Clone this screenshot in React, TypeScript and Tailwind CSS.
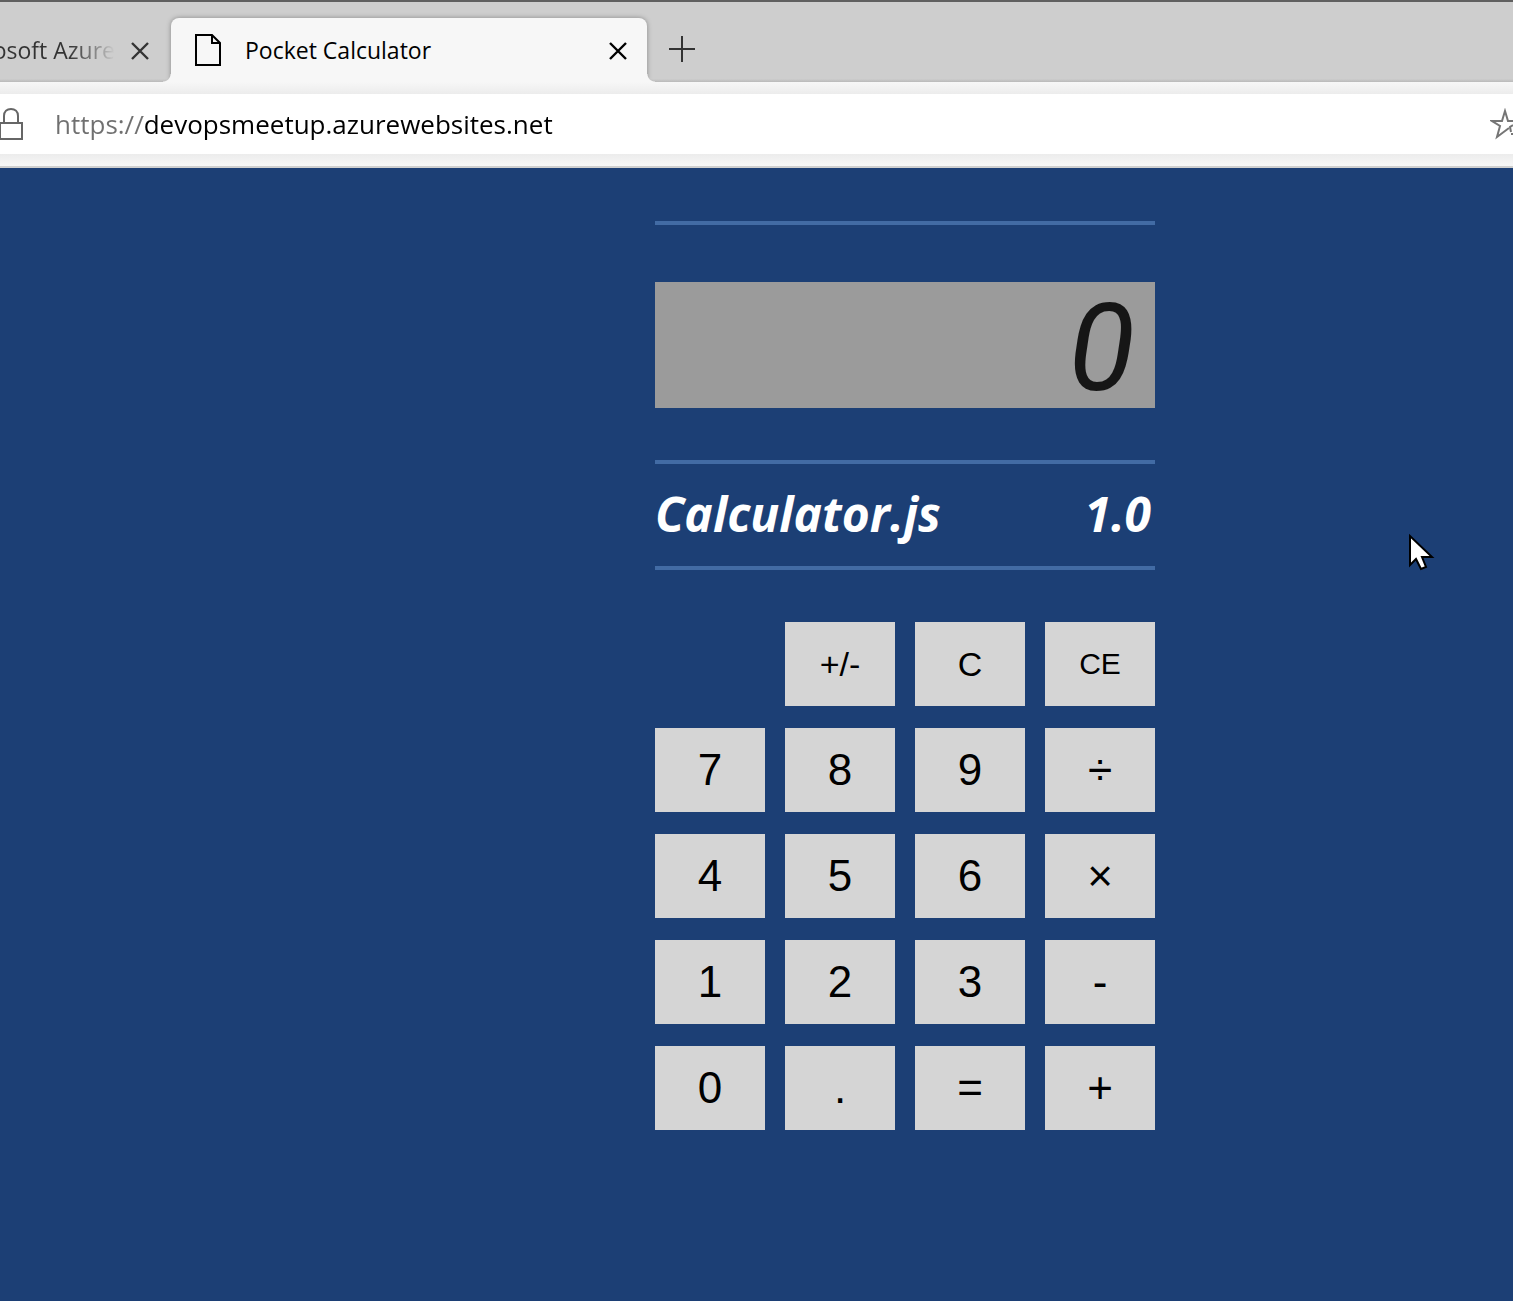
import { useState } from "react";

const KEY_ROWS: string[][] = [
  ["+/-", "C", "CE"],
  ["7", "8", "9", "÷"],
  ["4", "5", "6", "×"],
  ["1", "2", "3", "-"],
  ["0", ".", "=", "+"],
];

function CloseIcon() {
  return (
    <svg width="18" height="18" viewBox="0 0 18 18" fill="none" stroke="currentColor" strokeWidth="2.4" aria-hidden="true">
      <path d="M1 1 17 17M17 1 1 17" />
    </svg>
  );
}

function TabStrip() {
  return (
    <div className="flex h-[82px] border-t-2 border-[#606060] bg-[#cecece] bg-linear-to-t from-[#bababa] to-[#cecece] to-4% pt-4">
      <div className="flex w-[171px] shrink-0 items-center overflow-hidden text-[#333]">
        <button className="flex w-[115px] justify-end overflow-hidden bg-linear-to-r from-[#333] from-60% to-[#cecece] bg-clip-text text-[23px] whitespace-nowrap text-transparent">
          Microsoft Azure
        </button>
        <button aria-label="Close Microsoft Azure" className="ml-4 pt-0.5">
          <CloseIcon />
        </button>
      </div>
      <div className="relative flex w-[476px] shrink-0 items-center rounded-t-lg bg-[#f7f7f7] pr-5 pl-6 shadow-[0_0_5px_rgba(0,0,0,0.35)]">
        <span className="absolute bottom-0 -left-2 size-2 bg-[radial-gradient(circle_at_0_0,transparent_7px,#f7f7f7_8px)]" />
        <span className="absolute -right-2 bottom-0 size-2 bg-[radial-gradient(circle_at_100%_0,transparent_7px,#f7f7f7_8px)]" />
        <svg width="26" height="32" viewBox="0 0 26 32" fill="none" stroke="#000" strokeWidth="2" aria-hidden="true">
          <path d="M1 1H17L25 9V31H1Z" />
          <path d="M17 1V9H25" />
        </svg>
        <button className="ml-6 flex-1 text-left text-[23px] whitespace-nowrap text-black">Pocket Calculator</button>
        <button aria-label="Close Pocket Calculator" className="pt-0.5 text-black">
          <CloseIcon />
        </button>
      </div>
      <button aria-label="New tab" className="ml-[22px] self-center pb-0.5 text-[#333]">
        <svg width="26" height="26" viewBox="0 0 26 26" stroke="currentColor" strokeWidth="2" aria-hidden="true">
          <path d="M13 0V26M0 13H26" />
        </svg>
      </button>
    </div>
  );
}

function AddressBar() {
  return (
    <div className="relative border-b-2 border-[#cfcfcf] bg-[#f7f7f7]">
      <div className="h-3 bg-linear-to-b from-[#f7f7f7] to-[#ececec]" />
      <div className="flex h-[60px] items-center overflow-hidden bg-white">
        <svg className="shrink-0" width="23" height="32" viewBox="0 0 23 32" fill="none" stroke="#666" strokeWidth="2" aria-hidden="true">
          <path d="M0 15H22V31H0Z" />
          <path d="M4 15V8C4 3.500 7 1 11 1S18 3.500 18 8V15" />
        </svg>
        <input
          aria-label="Address"
          defaultValue="https://devopsmeetup.azurewebsites.net"
          className="ml-8 min-w-0 flex-1 bg-[linear-gradient(to_right,#707070_88px,#000_88px)] bg-clip-text text-[26px] text-transparent outline-none"
        />
        <button aria-label="Add to favorites" className="w-[23px] shrink-0 overflow-hidden">
          <svg width="32" height="32" viewBox="0 0 32 32" fill="none" stroke="#757575" strokeWidth="2" aria-hidden="true">
            <path d="M19 20 15 23 7 29 10 18 2 13H12L15 3 18 13H28" />
            <path d="M21 24 20 19 23 17M21 26H26" />
          </svg>
        </button>
      </div>
      <div className="h-3 bg-linear-to-b from-[#ececec] to-[#f7f7f7]" />
    </div>
  );
}

function keySize(label: string) {
  if (label === "CE") return "text-[30px]";
  if (label === "C" || label === "+/-") return "text-[34px]";
  return "text-[44px]";
}

function Calculator() {
  const [value, setValue] = useState("0");

  const press = (key: string) => {
    if (key === "C" || key === "CE") setValue("0");
    else if (/\d/.test(key)) setValue(value === "0" ? key : (value + key).slice(0, 7));
  };

  return (
    <section aria-label="Calculator" className="w-[500px] pt-[53px]">
      <hr className="border-t-4 border-[#426ba4]" />
      <output className="mt-[57px] flex h-[126px] items-center justify-end bg-[#9b9b9b] pt-2 pr-5 font-[Roboto,'Liberation_Sans',sans-serif] text-[122px] leading-none text-[#161616] italic">
        {value}
      </output>
      <hr className="mt-[52px] border-t-4 border-[#426ba4]" />
      <div className="flex h-[102px] items-center justify-between pr-1 pb-0.5 text-[48px] font-bold text-white italic">
        <h1>Calculator.js</h1>
        <span>1.0</span>
      </div>
      <hr className="mb-[52px] border-t-4 border-[#426ba4]" />
      <div className="flex flex-col gap-[22px] pb-10">
        {KEY_ROWS.map((row) => (
          <div key={row.join()} className="flex justify-end gap-5">
            {row.map((label) => (
              <button
                key={label}
                onClick={() => press(label)}
                className={`h-[84px] w-[110px] bg-[#d5d5d5] font-['Liberation_Sans',Arial,sans-serif] leading-none text-black ${keySize(label)}`}
              >
                {label}
              </button>
            ))}
          </div>
        ))}
      </div>
    </section>
  );
}

export default function App() {
  return (
    <div className="relative flex min-h-screen flex-col overflow-hidden bg-[#1c3f75] font-['Open_Sans','Noto_Sans',sans-serif]">
      <header>
        <TabStrip />
        <AddressBar />
      </header>
      <main className="flex flex-1 justify-center pl-[297px]">
        <Calculator />
      </main>
      <svg className="absolute top-[533px] left-[1408px]" width="28" height="38" viewBox="0 0 28 38" aria-hidden="true">
        <path d="M2 3V32L8 26 13 36 18 34 14 24H24Z" fill="#fff" stroke="#000" strokeWidth="2" />
      </svg>
    </div>
  );
}
